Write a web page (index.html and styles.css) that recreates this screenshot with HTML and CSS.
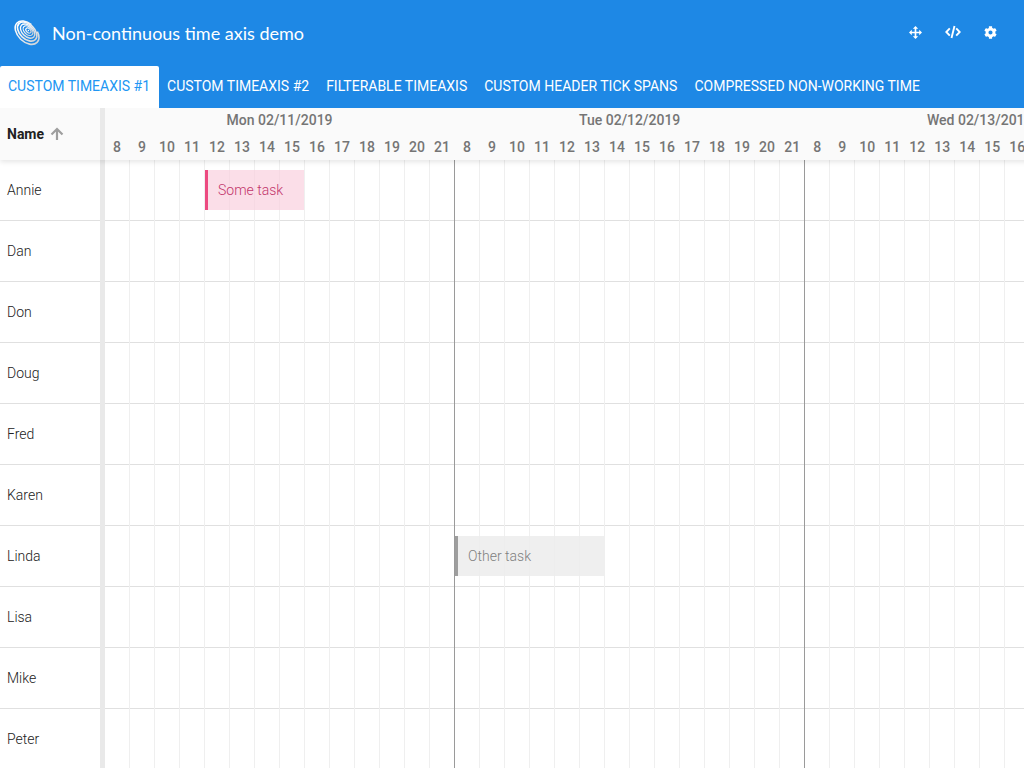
FILE: index.html
```html
<!DOCTYPE html>
<html lang="en">
<head>
<meta charset="utf-8">
<title>Non-continuous time axis demo</title>
<link rel="stylesheet" href="styles.css">
</head>
<body>
<header class="topbar">
  <a class="brand" href="#">
    <svg class="logo" viewBox="0 0 28 28" fill="none" aria-hidden="true">
      <defs><linearGradient id="silver" x1="0" y1="0" x2="1" y2="0"><stop offset="0" stop-color="#fff"/><stop offset="1" stop-color="#d2d6da"/></linearGradient></defs>
      <g transform="rotate(44 14 14)" stroke="url(#silver)">
        <ellipse cx="14.500" cy="14.500" rx="15" ry="9.800" stroke-width="1.700" stroke-dasharray="56 10 14 0"/>
        <ellipse cx="13.800" cy="13.500" rx="12.300" ry="7.900" stroke-width="1.800"/>
        <ellipse cx="13.800" cy="12.800" rx="9.200" ry="5.900" stroke-width="1.500"/>
        <ellipse cx="13.800" cy="12.200" rx="6.200" ry="4" stroke-width="1.300"/>
        <ellipse cx="14" cy="11.800" rx="3.300" ry="2.200" stroke-width="1.200"/>
        <circle cx="14" cy="11.800" r=".8" fill="#fff" stroke="none"/>
      </g>
    </svg>
    <h1 class="title">Non-continuous time axis demo</h1>
  </a>
  <div class="tools">
    <button class="tool" type="button" aria-label="Full screen"><svg viewBox="0 0 14 14" aria-hidden="true"><path d="M7 0l2.900 3H7.900v3.100h3.100V4.100L14 7l-3 2.900V7.900H7.900v3.100h2L7 14l-2.900-3h2V7.900H3v2L0 7l3-2.900v2h3.100V3h-2z"/></svg></button>
    <button class="tool tool-code" type="button" aria-label="Show code"><svg viewBox="0 0 16 14" fill="none" stroke-width="1.900" aria-hidden="true"><path d="M4.800 3.300L1.300 7l3.500 3.700M11.200 3.300L14.700 7l-3.500 3.700M9.500 1L6.500 13"/></svg></button>
    <button class="tool" type="button" aria-label="Settings"><svg viewBox="0 0 512 512" aria-hidden="true"><path d="M487.4 315.7l-42.600-24.600c4.300-23.200 4.300-47 0-70.200l42.600-24.600c4.900-2.800 7.100-8.600 5.500-14-11.100-35.600-30-67.800-54.700-94.600-3.800-4.100-10-5.100-14.800-2.300L380.800 110c-17.900-15.400-38.500-27.300-60.800-35.100V25.800c0-5.600-3.900-10.500-9.400-11.700-36.700-8.200-74.300-7.800-109.200 0-5.500 1.200-9.400 6.100-9.400 11.700V75c-22.200 7.900-42.800 19.800-60.800 35.100L88.700 85.500c-4.900-2.800-11-1.900-14.800 2.300-24.700 26.700-43.600 58.900-54.700 94.600-1.700 5.400.6 11.200 5.500 14L67.300 221c-4.300 23.200-4.300 47 0 70.200l-42.600 24.600c-4.900 2.800-7.100 8.600-5.500 14 11.100 35.600 30 67.800 54.700 94.600 3.800 4.100 10 5.100 14.800 2.300l42.600-24.600c17.900 15.400 38.500 27.300 60.800 35.100v49.200c0 5.600 3.900 10.500 9.400 11.700 36.700 8.200 74.300 7.800 109.200 0 5.500-1.200 9.400-6.100 9.400-11.700v-49.200c22.200-7.900 42.800-19.800 60.800-35.100l42.600 24.600c4.900 2.800 11 1.900 14.800-2.300 24.700-26.700 43.600-58.900 54.700-94.600 1.500-5.500-.7-11.300-5.600-14.100zM256 336c-44.100 0-80-35.900-80-80s35.900-80 80-80 80 35.900 80 80-35.900 80-80 80z"/></svg></button>
  </div>
</header>
<nav class="tabs" role="tablist">
  <button class="tab tab-active" type="button" role="tab" aria-selected="true">CUSTOM TIMEAXIS #1</button>
  <button class="tab" type="button" role="tab">CUSTOM TIMEAXIS #2</button>
  <button class="tab" type="button" role="tab">FILTERABLE TIMEAXIS</button>
  <button class="tab" type="button" role="tab">CUSTOM HEADER TICK SPANS</button>
  <button class="tab" type="button" role="tab">COMPRESSED NON-WORKING TIME</button>
</nav>
<main class="scheduler">
  <table class="grid">
    <colgroup><col class="col-name"><col class="col-splitter"><col class="col-tick" span="42"></colgroup>
    <thead class="head">
      <tr class="days">
        <th class="name-head" rowspan="2" scope="col"><span class="name-label">Name <svg class="sort" viewBox="0 0 14 14" fill="none" stroke="#9e9e9e" stroke-width="2.200" aria-hidden="true"><path d="M7 13V2M1.500 7.500L7 2l5.500 5.500"/></svg></span></th>
        <td class="splitter" rowspan="2"></td>
        <th colspan="14">Mon 02/11/2019</th><th colspan="14">Tue 02/12/2019</th><th colspan="14">Wed 02/13/2019</th>
      </tr>
      <tr class="hours">
        <th>8</th><th>9</th><th>10</th><th>11</th><th>12</th><th>13</th><th>14</th><th>15</th><th>16</th><th>17</th><th>18</th><th>19</th><th>20</th><th>21</th>
        <th>8</th><th>9</th><th>10</th><th>11</th><th>12</th><th>13</th><th>14</th><th>15</th><th>16</th><th>17</th><th>18</th><th>19</th><th>20</th><th>21</th>
        <th>8</th><th>9</th><th>10</th><th>11</th><th>12</th><th>13</th><th>14</th><th>15</th><th>16</th><th></th><th></th><th></th><th></th><th></th>
      </tr>
    </thead>
    <tbody>
      <tr><th class="name" scope="row">Annie</th><td class="splitter"></td><td class="lane" colspan="42"><div class="ticks"><div class="event event-pink">Some task</div></div></td></tr>
      <tr><th class="name" scope="row">Dan</th><td class="splitter"></td><td class="lane" colspan="42"></td></tr>
      <tr><th class="name" scope="row">Don</th><td class="splitter"></td><td class="lane" colspan="42"></td></tr>
      <tr><th class="name" scope="row">Doug</th><td class="splitter"></td><td class="lane" colspan="42"></td></tr>
      <tr><th class="name" scope="row">Fred</th><td class="splitter"></td><td class="lane" colspan="42"></td></tr>
      <tr><th class="name" scope="row">Karen</th><td class="splitter"></td><td class="lane" colspan="42"></td></tr>
      <tr><th class="name" scope="row">Linda</th><td class="splitter"></td><td class="lane" colspan="42"><div class="ticks"><div class="event event-gray">Other task</div></div></td></tr>
      <tr><th class="name" scope="row">Lisa</th><td class="splitter"></td><td class="lane" colspan="42"></td></tr>
      <tr><th class="name" scope="row">Mike</th><td class="splitter"></td><td class="lane" colspan="42"></td></tr>
      <tr><th class="name" scope="row">Peter</th><td class="splitter"></td><td class="lane" colspan="42"></td></tr>
    </tbody>
  </table>
</main>
</body>
</html>
```
FILE: styles.css
```css
* { box-sizing: border-box; }
body {
  margin: 0;
  height: 100vh;
  display: flex;
  flex-direction: column;
  overflow: hidden;
  background: #fff;
  font: 14px/20px Roboto, sans-serif;
}
.topbar {
  flex: none;
  display: flex;
  align-items: center;
  justify-content: space-between;
  height: 66px;
  padding: 0 27px 2px 14px;
  background: #1e88e5;
}
.brand {
  display: flex;
  align-items: center;
  gap: 12px;
  color: #fff;
  text-decoration: none;
}
.logo { width: 26px; height: 26px; overflow: visible; }
.title { margin: 0; padding-top: 2px; font: 400 18px/28px Lato, sans-serif; }
.tools { display: flex; align-items: center; gap: 23px; }
.tool {
  display: flex;
  padding: 0;
  border: 0;
  background: none;
  color: #fff;
}
.tool svg { width: 13px; height: 13px; fill: currentColor; }
.tool-code svg { width: 16px; height: 14px; fill: none; stroke: currentColor; }
.tabs {
  flex: none;
  display: flex;
  height: 42px;
  background: #1e88e5;
}
.tab {
  padding: 0 9px 2px 8px;
  border: 0;
  border-radius: 2px 2px 0 0;
  background: none;
  color: #fff;
  font: 400 14px/20px Roboto, sans-serif;
  white-space: nowrap;
}
.tab-active { background: #fff; color: #2196f3; }
.scheduler { flex: 1; min-height: 0; overflow: hidden; }
.grid {
  width: 1155px;
  table-layout: fixed;
  border-spacing: 0;
}
.grid th, .grid td { padding: 0; }
.col-name { width: 100px; }
.col-splitter { width: 5px; }
.col-tick { width: 25px; }
.head {
  position: relative;
  background: #fafafa;
  box-shadow: 0 2px 5px rgba(0, 0, 0, 0.1);
}
.grid .head th { padding-right: 1px; color: #757575; font-weight: 500; }
.grid .days th { padding-bottom: 2px; }
.days { height: 25px; }
.hours { height: 27px; }
.grid .head .name-head { padding: 0 0 0 7px; color: #212121; font-weight: 700; text-align: left; }
.name-label { display: flex; align-items: center; gap: 6px; }
.sort { width: 14px; height: 14px; }
.splitter { background: #e9e9e9; }
.name {
  height: 61px;
  border-bottom: 1px solid #e0e0e0;
  color: #212121;
  font-weight: 300;
  text-align: left;
}
.grid .name { padding-left: 7px; }
.lane {
  background:
    linear-gradient(to left, #9a9a9a 1px, transparent 1px) 0 0 / 350px 100%,
    linear-gradient(to left, #efefef 1px, transparent 1px) 0 0 / 25px 100%,
    linear-gradient(to top, #e0e0e0 1px, transparent 1px);
}
.ticks {
  display: grid;
  grid-template-columns: repeat(42, 25px);
  padding-bottom: 1px;
}
.event {
  height: 40px;
  margin-right: 1px;
  padding-left: 10px;
  border-left: 3px solid;
  font-weight: 300;
  line-height: 40px;
}
.event-pink {
  grid-column: 5 / span 4;
  border-color: #ec4a80;
  background: rgba(250, 208, 222, 0.7);
  color: #c2356b;
}
.event-gray {
  grid-column: 15 / span 6;
  border-color: #9e9e9e;
  background: rgba(236, 236, 236, 0.85);
  color: #808080;
}
```
